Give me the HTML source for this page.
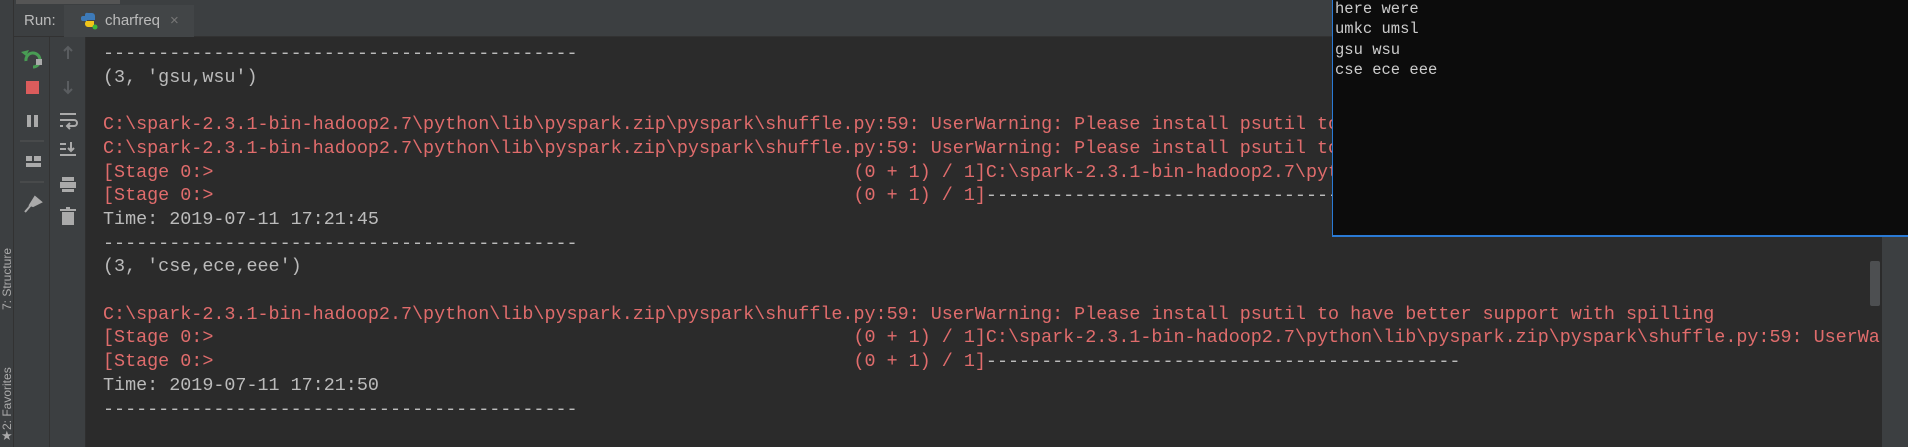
<!DOCTYPE html>
<html><head><meta charset="utf-8"><style>
*{margin:0;padding:0;box-sizing:border-box}
html,body{width:1908px;height:447px;overflow:hidden;background:#2b2b2b;font-family:"Liberation Sans",sans-serif}
.abs{position:absolute}
#stripe{left:0;top:0;width:14px;height:447px;background:#3c3f41;border-right:1px solid #323232}
#topstrip{left:14px;top:0;width:1894px;height:5px;background:#3c3f41}
#topstrip i{position:absolute;left:2px;top:0;width:104px;height:4px;background:#555}
#tabbar{left:14px;top:5px;width:1894px;height:32px;background:#3c3f41;border-bottom:1px solid #323232}
#run{left:24px;top:12px;color:#bbb;font-size:15px}
#tab{left:64px;top:5px;width:130px;height:32px;background:#424547}
#tabtxt{left:105px;top:12px;color:#bbb;font-size:15px}
#x{left:170px;top:12px;color:#777;font-size:15px}
#col1{left:14px;top:37px;width:36px;height:410px;background:#3c3f41;border-right:1px solid #333}
#col2{left:50px;top:37px;width:36px;height:410px;background:#3c3f41;border-right:1px solid #2f2f2f}
#out{left:103px;top:42px;font-family:"Liberation Mono",monospace;font-size:18.4px;line-height:23.7px;color:#bbb;white-space:pre;width:1779px;overflow:hidden}
.r{color:#e06c6c}
#right{left:1882px;top:0;width:26px;height:447px;background:#3c3f41}
#thumb{left:1870px;top:261px;width:10px;height:45px;background:#4d4f51;border-radius:2px}
#pop{left:1332px;top:0;width:576px;height:237px;background:#0c0c0c;border-left:1px solid #2a7ad5;border-bottom:2px solid #2a7ad5}
#pop pre{position:absolute;left:2px;top:-1px;font-family:"Liberation Mono",monospace;font-size:15.5px;line-height:20.3px;color:#cccccc}
.vt{color:#aaa;font-size:12px;transform:rotate(-90deg);transform-origin:left top;white-space:nowrap}
</style></head><body>
<div class="abs" id="stripe"></div>
<div class="abs" id="topstrip"><i></i></div>
<div class="abs" id="tabbar"></div>
<div class="abs" id="tab"></div>
<div class="abs" id="run">Run:</div>
<svg class="abs" style="left:80px;top:12px" width="18" height="18" viewBox="0 0 18 18"><path d="M8 1h4a3 3 0 0 1 3 3v4H7v1H3a2 2 0 0 1-2-2V6a2 2 0 0 1 2-2h2V3a2 2 0 0 1 3-2z" fill="#3d7ab8"/><path d="M6 9h8v4a2 2 0 0 1-2 2H8a3 3 0 0 1-3-3v-1z" fill="#f0c419"/><circle cx="15" cy="15" r="2.5" fill="#3bb83b"/></svg>
<div class="abs" id="tabtxt">charfreq</div>
<div class="abs" id="x">×</div>
<div class="abs" id="col1"></div>
<div class="abs" id="col2"></div>
<svg class="abs" style="left:14px;top:37px" width="72" height="200">
<path d="M12 24a7 7 0 1 1 7 6" fill="none" stroke="#499c54" stroke-width="3"/><path d="M7 15l5 4 3-6z" fill="#499c54"/><rect x="22" y="22" width="6" height="6" fill="#aaa"/>
<rect x="12" y="44" width="13" height="13" fill="#db5c5c"/>
<rect x="13" y="78" width="4" height="12" fill="#aaa"/><rect x="20" y="78" width="4" height="12" fill="#aaa"/>
<line x1="6" y1="104" x2="30" y2="104" stroke="#555"/>
<rect x="12" y="119" width="6" height="5" fill="#aaa"/><rect x="20" y="119" width="7" height="5" fill="#aaa"/><rect x="12" y="126" width="15" height="4" fill="#aaa"/>
<line x1="6" y1="145" x2="30" y2="145" stroke="#555"/>
<path d="M16 168l5-8 6 5-8 4z M17 168l-6 7" fill="#aaa" stroke="#aaa" stroke-width="2"/>
<path d="M54 10v12M50 14l4-4 4 4" stroke="#5a5d60" stroke-width="2" fill="none"/>
<path d="M54 44v12M50 52l4 4 4-4" stroke="#5a5d60" stroke-width="2" fill="none"/>
<path d="M46 77h16M46 83h14a3 3 0 0 1 0 6h-6M56 86l-3 3 3 3M46 89h3" stroke="#aaa" stroke-width="2" fill="none"/>
<path d="M46 107h6M46 112h6M46 118h16M57 105v9M54 111l3 3 3-3" stroke="#aaa" stroke-width="2" fill="none"/>
<rect x="48" y="140" width="12" height="4" fill="#aaa"/><rect x="46" y="145" width="16" height="6" fill="#aaa"/><rect x="48" y="152" width="12" height="3" fill="#aaa"/>
<rect x="46" y="172" width="16" height="2" fill="#aaa"/><rect x="52" y="170" width="4" height="2" fill="#aaa"/><rect x="48" y="175" width="12" height="13" fill="#aaa"/>
</svg>
<div class="abs vt" style="left:0px;top:310px">7: Structure</div>
<div class="abs vt" style="left:0px;top:430px">2: Favorites</div>
<div class="abs" style="left:1px;top:428px;color:#aaa;font-size:13px">★</div>
<div class="abs" id="out">-------------------------------------------
(3, 'gsu,wsu')

<span class="r">C:\spark-2.3.1-bin-hadoop2.7\python\lib\pyspark.zip\pyspark\shuffle.py:59: UserWarning: Please install psutil to have better support with spilling
C:\spark-2.3.1-bin-hadoop2.7\python\lib\pyspark.zip\pyspark\shuffle.py:59: UserWarning: Please install psutil to have better support with spilling
[Stage 0:>                                                          (0 + 1) / 1]C:\spark-2.3.1-bin-hadoop2.7\python\lib\pyspark.zip\pyspark\shuffle.py:59: UserWarning
[Stage 0:>                                                          (0 + 1) / 1]</span>-------------------------------------------
Time: 2019-07-11 17:21:45
-------------------------------------------
(3, 'cse,ece,eee')

<span class="r">C:\spark-2.3.1-bin-hadoop2.7\python\lib\pyspark.zip\pyspark\shuffle.py:59: UserWarning: Please install psutil to have better support with spilling
[Stage 0:>                                                          (0 + 1) / 1]C:\spark-2.3.1-bin-hadoop2.7\python\lib\pyspark.zip\pyspark\shuffle.py:59: UserWarning
[Stage 0:>                                                          (0 + 1) / 1]</span>-------------------------------------------
Time: 2019-07-11 17:21:50
-------------------------------------------</div>
<div class="abs" id="right"></div>
<div class="abs" id="thumb"></div>
<div class="abs" id="pop"><pre>here were
umkc umsl
gsu wsu
cse ece eee</pre></div>
</body></html>
